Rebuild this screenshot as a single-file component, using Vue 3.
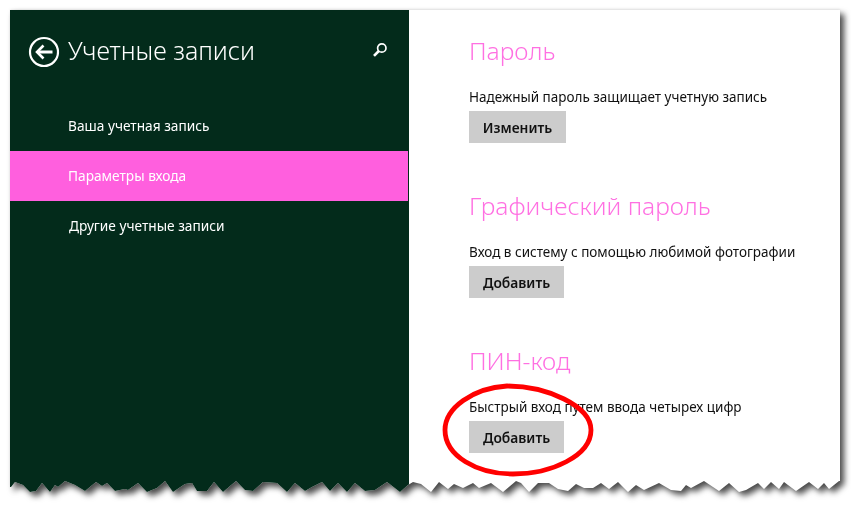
<script setup>
const navItems = [
  { label: 'Ваша учетная запись', active: false },
  { label: 'Параметры входа', active: true },
  { label: 'Другие учетные записи', active: false }
]

const sections = [
  { title: 'Пароль', text: 'Надежный пароль защищает учетную запись', action: 'Изменить', wide: true },
  { title: 'Графический пароль', text: 'Вход в систему с помощью любимой фотографии', action: 'Добавить', wide: false },
  { title: 'ПИН-код', text: 'Быстрый вход путем ввода четырех цифр', action: 'Добавить', wide: false }
]

// Torn lower edge, measured in page pixels
const tear = [
  [11,487],[15,482],[23,485],[30,492],[36,491],[42,483],[50,492],[55,485],[58,487],[65,481],[70,483],[75,485],[85,491],[96,482],[102,486],[107,483],[115,491],[125,489],[128,490],[138,483],[147,492],[157,488],[165,481],[173,492],[185,484],[192,483],[197,491],[207,491],[214,482],[223,492],[236,481],[245,490],[253,491],[263,482],[277,483],[287,492],[295,483],[305,491],[312,487],[322,482],[330,491],[338,483],[347,492],[355,483],[365,491],[375,490],[387,482],[400,492],[408,485],[413,482],[421,484],[431,492],[439,482],[448,489],[454,484],[463,488],[473,483],[479,488],[491,483],[503,492],[516,481],[521,483],[529,492],[538,483],[549,483],[558,489],[568,491],[576,484],[584,488],[593,488],[601,483],[609,489],[618,482],[628,492],[636,485],[644,490],[659,483],[671,490],[681,491],[686,485],[691,488],[704,481],[719,491],[729,483],[739,492],[746,490],[758,483],[764,489],[771,482],[779,489],[784,482],[796,491],[809,482],[818,489],[824,483],[829,489],[839,481]
]
const clip = 'polygon(0 0, 830px 0, 830px 471px, ' +
  tear.slice().reverse().map(([x, y]) => `${x - 10}px ${y - 10}px`).join(', ') +
  ', 0 477px)'
</script>

<template>
  <div class="page">
    <div class="shadow">
      <div class="window" :style="{ clipPath: clip }">
        <aside class="sidebar">
          <header class="side-head">
            <svg class="back" width="32" height="32" viewBox="0 0 32 32" fill="none" stroke="#fff">
              <circle cx="16" cy="16" r="14" stroke-width="2.2" />
              <path d="M24.5 16H9" stroke-width="3" />
              <path d="M15.5 9.5L9 16l6.500 6.500" stroke-width="2.600" />
            </svg>
            <h1>Учетные записи</h1>
            <svg class="search" width="16" height="16" viewBox="0 0 16 16" fill="none" stroke="#fff">
              <circle cx="9.800" cy="6" r="4.200" stroke-width="1.700" />
              <path d="M6.800 9L2 13.800" stroke-width="2.600" />
            </svg>
          </header>
          <nav class="nav">
            <a v-for="item in navItems" :key="item.label" class="nav-item" :class="{ active: item.active }">{{ item.label }}</a>
          </nav>
        </aside>
        <main class="content">
          <section v-for="s in sections" :key="s.title" class="block">
            <h2>{{ s.title }}</h2>
            <p>{{ s.text }}</p>
            <button :class="{ wide: s.wide }">{{ s.action }}</button>
          </section>
        </main>
      </div>
    </div>
    <svg class="ring" width="160" height="104" viewBox="0 0 160 104" fill="none">
      <path d="M66 6C106 6 150 26 150 50C150 76 110 94 72 94C36 94 4 76 4 50C4 28 32 8 66 6Z" stroke="#f00" stroke-width="4.800" />
    </svg>
  </div>
</template>

<style scoped>
.page {
  position: relative;
  width: 851px;
  height: 509px;
  padding: 10px 0 0 10px;
  box-sizing: border-box;
  background: #fff;
  overflow: hidden;
  font-family: "Noto Sans", "Open Sans", "Liberation Sans", sans-serif;
}
.shadow {
  width: 830px;
  height: 483px;
  filter: drop-shadow(4px 4px 3px rgba(0, 0, 0, 0.7)) drop-shadow(0 -1px 1px rgba(0, 0, 0, 0.07));
}
.window {
  display: flex;
  width: 830px;
  height: 483px;
  background: #fff;
}
.sidebar {
  width: 399px;
  flex: none;
  background: #032b1b;
  color: #fff;
}
.side-head {
  display: flex;
  align-items: center;
  height: 91px;
  padding: 0 0 8px 18px;
  box-sizing: border-box;
}
.back {
  flex: none;
}
.search {
  flex: none;
  margin-left: 119px;
  margin-top: -4px;
}
h1 {
  margin: -3px 0 0 8px;
  font-size: 25px;
  font-weight: 300;
  white-space: nowrap;
  width: 185px;
}
.nav {
  display: flex;
  flex-direction: column;
}
.nav-item {
  display: flex;
  align-items: center;
  height: 50px;
  margin-right: 1px;
  padding-left: 58px;
  padding-bottom: 2px;
  box-sizing: border-box;
  font-size: 13.7px;
  white-space: nowrap;
}
.nav-item:last-child {
  padding-left: 59px;
}
.nav-item.active {
  background: #ff5fde;
}
.content {
  flex: 1;
  padding: 23px 0 0 60px;
  color: #111;
}
.block {
  height: 155px;
}
h2 {
  margin: 0;
  height: 47px;
  line-height: 35px;
  font-size: 24.6px;
  font-weight: 300;
  color: #ff70e2;
}
p {
  margin: 0;
  height: 31px;
  line-height: 24px;
  padding-top: 5px;
  box-sizing: border-box;
  font-size: 13.5px;
  white-space: nowrap;
}
button {
  display: block;
  width: 95px;
  height: 32px;
  padding: 0;
  border: 0;
  background: #ccc;
  color: #111;
  font: 600 13.8px "Noto Sans", "Open Sans", sans-serif;
}
button.wide {
  width: 97px;
}
.ring {
  position: absolute;
  left: 441px;
  top: 380px;
}
</style>
